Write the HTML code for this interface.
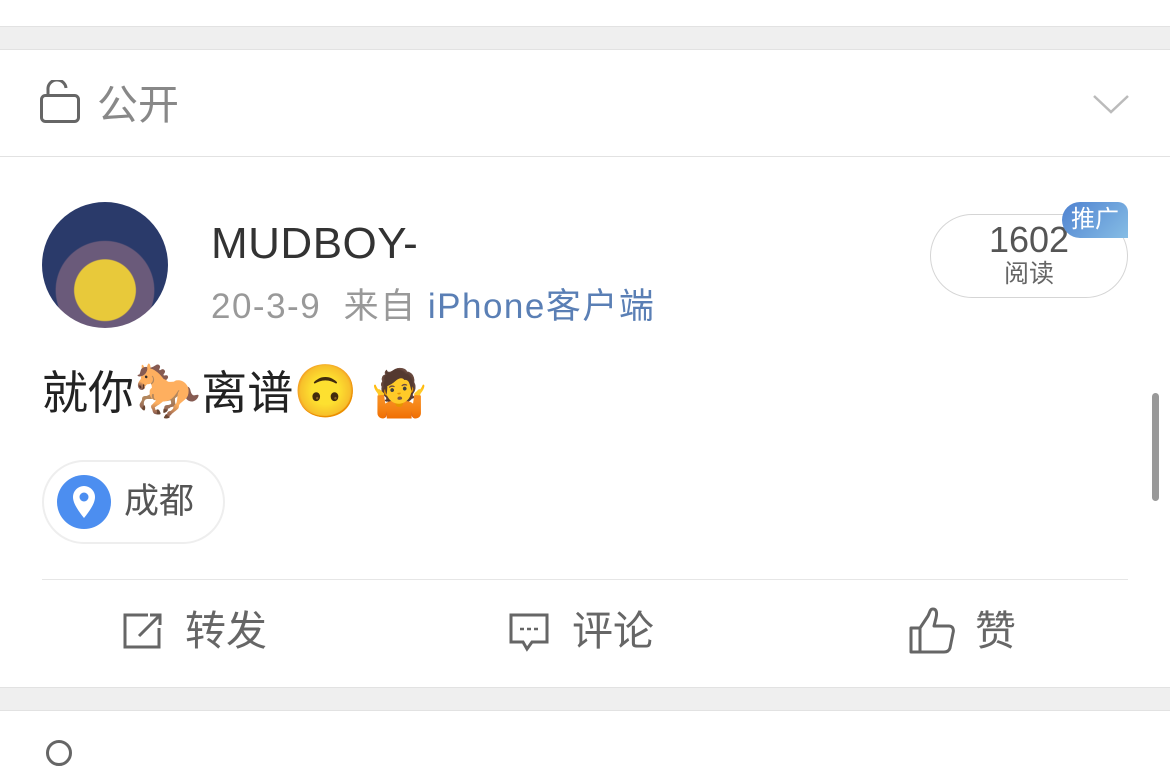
<!DOCTYPE html>
<html><head><meta charset="utf-8"><style>
*{margin:0;padding:0;box-sizing:border-box}
body{width:1170px;height:750px;overflow:hidden;background:#fff;font-family:"Liberation Sans","Noto Sans CJK SC",sans-serif;position:relative}
.a{position:absolute;white-space:nowrap}
</style></head><body>
<div class="a" style="left:0;top:26px;width:1170px;height:24px;background:#efefef;border-top:1px solid #e2e2e2;border-bottom:1px solid #e2e2e2"></div>
<svg class="a" style="left:40px;top:80px" width="40" height="44" viewBox="0 0 40 44"><rect x="1.5" y="15.5" width="37" height="26" rx="4" fill="none" stroke="#666" stroke-width="3"/><path d="M8 15 V10 A9 9 0 0 1 26 8" fill="none" stroke="#666" stroke-width="3"/></svg>
<div class="a" style="left:97px;top:80px;font-size:41px;color:#888;line-height:50px">公开</div>
<svg class="a" style="left:1092px;top:94px" width="38" height="22"><path d="M2 2 L19 18 L36 2" fill="none" stroke="#bbb" stroke-width="2.5"/></svg>
<div class="a" style="left:0;top:156px;width:1170px;height:1px;background:#e2e2e2"></div>
<div class="a" style="left:42px;top:202px;width:126px;height:126px;border-radius:50%;background:radial-gradient(circle at 50% 70%,#e8c93a 0 28%,#6a5a7a 29% 45%,#2a3a6a 46%)"></div>
<div class="a" style="left:211px;top:218px;font-size:44px;color:#333;line-height:52px;letter-spacing:0.5px">MUDBOY-</div>
<div class="a" style="left:211px;top:285px;font-size:35px;color:#999;line-height:44px;letter-spacing:1.5px">20-3-9&nbsp; 来自 <span style="color:#5a7fb5">iPhone客户端</span></div>
<div class="a" style="left:930px;top:214px;width:198px;height:84px;border:1px solid #d5d5d5;border-radius:42px"></div>
<div class="a" style="left:930px;top:220px;width:198px;text-align:center;font-size:36px;color:#555;line-height:40px">1602</div>
<div class="a" style="left:930px;top:260px;width:198px;text-align:center;font-size:25px;color:#666;line-height:28px">阅读</div>
<div class="a" style="left:1062px;top:202px;width:66px;height:36px;border-radius:18px 10px 0 18px;background:linear-gradient(135deg,#4f82d0,#86bde5);color:#fff;font-size:24px;line-height:36px;text-align:center">推广</div>
<div class="a" style="left:42px;top:362px;font-size:46px;color:#222;line-height:58px">就你<span style="font-size:54px">🐎</span>离谱<span style="font-size:52px">🙃</span> <span style="font-size:46px">🤷</span></div>
<div class="a" style="left:42px;top:460px;width:183px;height:84px;border:2px solid #eee;border-radius:42px"></div>
<div class="a" style="left:57px;top:475px;width:54px;height:54px;border-radius:50%;background:#4c8ef0"></div>
<svg class="a" style="left:70px;top:484px" width="28" height="36" viewBox="0 0 28 36"><path d="M14 34 C6 24 3 18 3 13 A11 11 0 0 1 25 13 C25 18 22 24 14 34Z" fill="#fff"/><circle cx="14" cy="13" r="4.5" fill="#4c8ef0"/></svg>
<div class="a" style="left:124px;top:479px;font-size:35px;color:#555;line-height:46px">成都</div>
<div class="a" style="left:42px;top:579px;width:1086px;height:1px;background:#e6e6e6"></div>
<svg class="a" style="left:122px;top:612px" width="42" height="38" viewBox="0 0 42 38"><path d="M26 3 H3 V35 H37 V16" fill="none" stroke="#666" stroke-width="3"/><path d="M17 24 L37 4 M28 3 H38 V13" fill="none" stroke="#666" stroke-width="3"/></svg>
<div class="a" style="left:185px;top:607px;font-size:41px;color:#666;line-height:48px">转发</div>
<svg class="a" style="left:508px;top:612px" width="42" height="42" viewBox="0 0 42 42"><path d="M3 3 H39 V30 H24 L19 37 L15 30 H3Z" fill="none" stroke="#666" stroke-width="3"/><path d="M12 17h4M19 17h4M26 17h4" stroke="#666" stroke-width="2.5"/></svg>
<div class="a" style="left:572px;top:607px;font-size:41px;color:#666;line-height:48px">评论</div>
<svg class="a" style="left:908px;top:606px" width="48" height="48" viewBox="0 0 48 48"><path d="M3 22 H12 V46 H3Z M12 22 L20 10 C22 6 22 3 25 3 C29 3 29 8 28 12 L26 20 H41 C45 20 46 24 45 27 L42 42 C41 45 39 46 36 46 H12" fill="none" stroke="#666" stroke-width="3" stroke-linejoin="round"/></svg>
<div class="a" style="left:975px;top:607px;font-size:41px;color:#666;line-height:48px">赞</div>
<div class="a" style="left:0;top:687px;width:1170px;height:24px;background:#efefef;border-top:1px solid #e2e2e2;border-bottom:1px solid #e2e2e2"></div>
<div class="a" style="left:1152px;top:393px;width:7px;height:108px;border-radius:4px;background:#999"></div>
<div class="a" style="left:46px;top:740px;width:26px;height:26px;border:3px solid #666;border-radius:50%"></div>
</body></html>
